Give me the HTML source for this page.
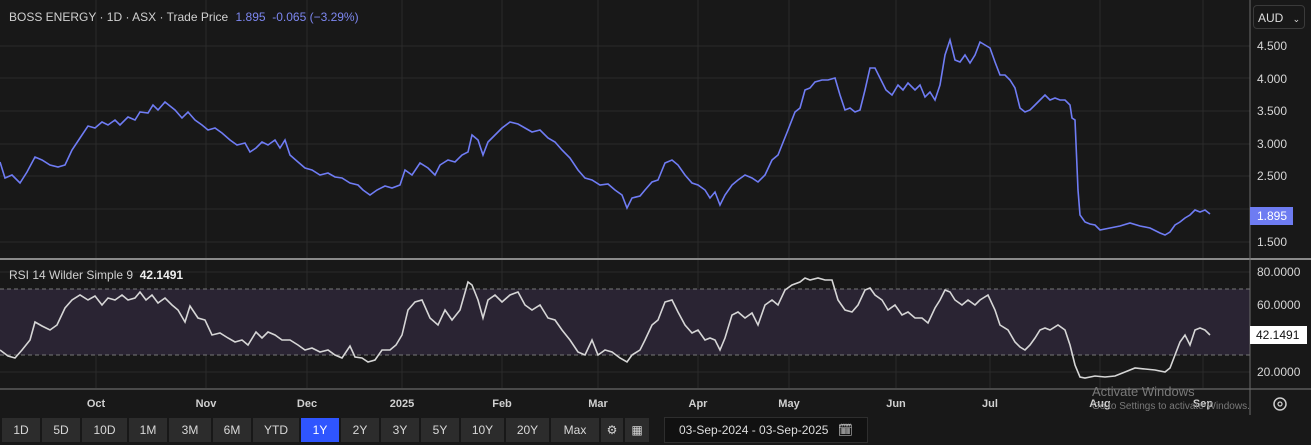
<!DOCTYPE html>
<html><head><meta charset="utf-8"><style>
body{margin:0;width:1311px;height:445px;background:#181818;overflow:hidden;font-family:"Liberation Sans",sans-serif;position:relative}
.t{position:absolute;white-space:nowrap}
.btn{position:absolute;top:418px;height:24px;background:#2c2c2c;color:#d8d8d8;font-size:12px;line-height:24px;text-align:center}
.ax{position:absolute;left:1257px;color:#d6d6d6;font-size:12px}
.m{position:absolute;top:398px;color:#d0d0d0;font-size:11px;font-weight:bold;transform:translateX(-50%)}
</style></head><body>
<svg width="1311" height="445" style="position:absolute;left:0;top:0">
<g stroke="#2a2a2a" stroke-width="1">
<line x1="96" y1="0" x2="96" y2="388"/><line x1="206" y1="0" x2="206" y2="388"/><line x1="307" y1="0" x2="307" y2="388"/><line x1="402" y1="0" x2="402" y2="388"/><line x1="502" y1="0" x2="502" y2="388"/><line x1="598" y1="0" x2="598" y2="388"/><line x1="698" y1="0" x2="698" y2="388"/><line x1="789" y1="0" x2="789" y2="388"/><line x1="896" y1="0" x2="896" y2="388"/><line x1="990" y1="0" x2="990" y2="388"/><line x1="1100" y1="0" x2="1100" y2="388"/><line x1="1203" y1="0" x2="1203" y2="388"/>
<line x1="0" y1="46" x2="1250" y2="46"/><line x1="0" y1="78" x2="1250" y2="78"/><line x1="0" y1="111" x2="1250" y2="111"/><line x1="0" y1="144" x2="1250" y2="144"/><line x1="0" y1="176" x2="1250" y2="176"/><line x1="0" y1="209" x2="1250" y2="209"/><line x1="0" y1="242" x2="1250" y2="242"/>
<line x1="0" y1="272" x2="1250" y2="272"/><line x1="0" y1="305" x2="1250" y2="305"/><line x1="0" y1="338" x2="1250" y2="338"/><line x1="0" y1="372" x2="1250" y2="372"/>
</g>
<rect x="0" y="289" width="1250" height="66" fill="#2a2433"/>
<line x1="0" y1="289" x2="1250" y2="289" stroke="#777" stroke-dasharray="4,3"/>
<line x1="0" y1="355" x2="1250" y2="355" stroke="#777" stroke-dasharray="4,3"/>
<line x1="0" y1="259" x2="1311" y2="259" stroke="#8a8a8a" stroke-width="2"/>
<line x1="0" y1="389" x2="1311" y2="389" stroke="#5a5a5a" stroke-width="1.5"/>
<line x1="1250" y1="0" x2="1250" y2="415" stroke="#6a6a6a"/>
<polyline fill="none" stroke="#6f7cf4" stroke-width="1.6" points="0,162 5,178 12,175 20,183 27,172 35,157 42,160 50,165 58,167 65,165 72,150 80,138 88,126 95,128 102,122 108,125 115,120 120,125 128,117 135,120 140,112 148,113 153,105 158,110 165,102 170,106 175,110 182,118 188,112 195,120 202,125 208,130 215,128 222,133 230,140 237,145 245,143 250,152 256,148 262,142 268,145 275,140 280,148 285,140 290,155 298,162 305,168 312,170 320,175 328,173 335,177 342,178 350,183 358,185 363,190 370,195 377,190 385,186 392,188 400,185 405,170 412,175 420,163 428,168 435,175 440,165 448,160 455,162 462,155 468,152 472,135 478,140 483,155 488,142 495,135 502,128 510,122 518,124 525,128 532,132 540,130 548,138 555,142 562,150 570,158 578,170 585,178 592,180 600,185 608,184 615,190 622,195 627,208 632,198 640,196 645,190 652,182 658,180 665,163 672,160 678,165 685,175 692,183 698,185 705,190 710,198 715,192 720,205 725,195 732,185 738,180 745,175 752,178 758,182 765,175 772,160 778,155 782,145 788,130 795,112 800,108 805,90 810,88 815,82 822,80 828,80 835,78 840,95 845,110 850,108 855,112 860,110 865,90 870,68 875,68 880,78 886,90 892,95 898,85 903,90 908,83 915,90 920,85 925,97 930,92 935,100 940,85 945,55 950,40 955,60 960,62 965,55 970,63 975,55 980,42 985,45 990,48 995,62 1000,75 1005,75 1010,80 1015,88 1020,108 1025,112 1030,110 1035,105 1040,100 1045,95 1050,100 1055,98 1060,100 1065,100 1070,105 1072,118 1075,120 1078,190 1080,215 1085,222 1090,224 1095,225 1100,230 1110,228 1120,226 1130,223 1140,226 1150,228 1160,233 1165,235 1170,232 1175,225 1180,222 1185,218 1190,215 1195,210 1200,212 1205,210 1210,214"/>
<polyline fill="none" stroke="#d6d6d6" stroke-width="1.6" points="0,350 8,356 15,358 22,350 30,340 35,322 42,326 50,330 57,325 65,308 72,300 80,295 88,300 95,296 102,305 108,298 115,300 122,295 128,300 135,298 140,292 146,300 152,295 158,303 165,298 172,305 178,310 185,322 190,306 198,318 205,320 212,335 220,333 228,338 235,342 242,340 248,345 256,332 262,338 268,332 275,335 282,340 290,340 298,345 305,350 312,348 320,352 328,350 335,355 342,358 350,346 355,357 362,358 368,362 375,360 382,350 390,350 396,345 402,335 408,310 415,302 422,300 430,318 438,325 445,310 452,320 460,310 468,282 472,285 478,300 483,318 488,300 495,295 502,302 510,295 518,292 525,305 532,310 540,305 548,318 555,320 562,330 570,340 578,352 585,355 592,340 598,355 605,350 612,352 620,358 627,362 632,355 640,350 645,340 652,325 658,320 665,302 672,300 678,312 685,325 692,333 698,330 705,340 710,338 715,340 720,350 725,338 732,315 738,312 745,318 752,313 758,325 765,305 772,300 778,305 785,290 792,285 800,282 805,278 810,280 818,278 825,280 832,280 838,300 845,310 852,312 858,305 865,290 870,288 875,295 882,300 888,310 895,305 902,315 908,312 915,318 922,318 928,323 935,308 940,300 945,290 950,292 955,300 962,305 968,300 975,305 980,300 988,295 995,310 1000,325 1008,330 1015,342 1020,347 1025,350 1030,345 1035,338 1040,330 1045,328 1050,330 1058,325 1065,330 1070,345 1075,365 1080,377 1085,378 1095,376 1105,377 1115,376 1125,372 1135,368 1145,369 1155,370 1165,372 1170,368 1175,355 1180,342 1185,335 1190,345 1195,330 1200,328 1205,330 1210,335"/>
<circle cx="1280" cy="404" r="6" fill="none" stroke="#ccc" stroke-width="1.5"/><circle cx="1280" cy="404" r="2" fill="none" stroke="#ccc" stroke-width="1.3"/>
</svg>
<div class="t" style="left:9px;top:10px;font-size:12px;color:#d0d0d0">BOSS ENERGY · 1D · ASX · Trade Price <span style="color:#7d87f0;margin-left:4px">1.895 &nbsp;-0.065 (−3.29%)</span></div>
<div class="t" style="left:9px;top:268px;font-size:12px;color:#d0d0d0">RSI 14 Wilder Simple 9 &nbsp;<b style="color:#eee">42.1491</b></div>
<div class="t" style="left:1253px;top:5px;width:52px;height:24px;border:1px solid #3a3a3a;border-radius:4px;font-size:12px;color:#ddd;line-height:24px;padding-left:4px;box-sizing:border-box">AUD <span style="font-size:9px;margin-left:6px">⌄</span></div>
<div class="ax" style="top:39px">4.500</div><div class="ax" style="top:72px">4.000</div><div class="ax" style="top:104px">3.500</div><div class="ax" style="top:137px">3.000</div><div class="ax" style="top:169px">2.500</div><div class="ax" style="top:235px">1.500</div>
<div class="t" style="left:1250px;top:207px;width:43px;height:18px;background:#6e7cf2;color:#fff;font-size:12px;line-height:18px;padding-left:7px;box-sizing:border-box">1.895</div>
<div class="ax" style="top:265px">80.0000</div><div class="ax" style="top:298px">60.0000</div><div class="ax" style="top:365px">20.0000</div>
<div class="t" style="left:1250px;top:326px;width:57px;height:18px;background:#fff;color:#111;font-size:12px;line-height:18px;padding-left:6px;box-sizing:border-box">42.1491</div>
<div class="m" style="left:96px">Oct</div><div class="m" style="left:206px">Nov</div><div class="m" style="left:307px">Dec</div><div class="m" style="left:402px">2025</div><div class="m" style="left:502px">Feb</div><div class="m" style="left:598px">Mar</div><div class="m" style="left:698px">Apr</div><div class="m" style="left:789px">May</div><div class="m" style="left:896px">Jun</div><div class="m" style="left:990px">Jul</div><div class="m" style="left:1100px">Aug</div><div class="m" style="left:1203px">Sep</div>
<div class="t" style="left:1092px;top:384px;font-size:13px;color:#7a7a7a">Activate Windows</div>
<div class="t" style="left:1092px;top:401px;font-size:10px;color:#7a7a7a">Go to Settings to activate Windows.</div>
<div class="btn" style="left:2px;width:38px">1D</div><div class="btn" style="left:42px;width:38px">5D</div><div class="btn" style="left:82px;width:45px">10D</div><div class="btn" style="left:129px;width:38px">1M</div><div class="btn" style="left:169px;width:42px">3M</div><div class="btn" style="left:213px;width:38px">6M</div><div class="btn" style="left:253px;width:46px">YTD</div><div class="btn" style="left:301px;width:38px;background:#2f55ff;color:#fff">1Y</div><div class="btn" style="left:341px;width:38px">2Y</div><div class="btn" style="left:381px;width:38px">3Y</div><div class="btn" style="left:421px;width:38px">5Y</div><div class="btn" style="left:461px;width:43px">10Y</div><div class="btn" style="left:506px;width:43px">20Y</div><div class="btn" style="left:551px;width:48px">Max</div><div class="btn" style="left:601px;width:22px">⚙</div><div class="btn" style="left:625px;width:24px">▦</div>
<div class="t" style="left:664px;top:417px;width:204px;height:26px;background:#111;border:1px solid #2e2e2e;box-sizing:border-box;color:#ddd;font-size:12px;line-height:24px;padding-left:14px">03-Sep-2024 - 03-Sep-2025 <span style="margin-left:6px">🗓</span></div>
</body></html>
